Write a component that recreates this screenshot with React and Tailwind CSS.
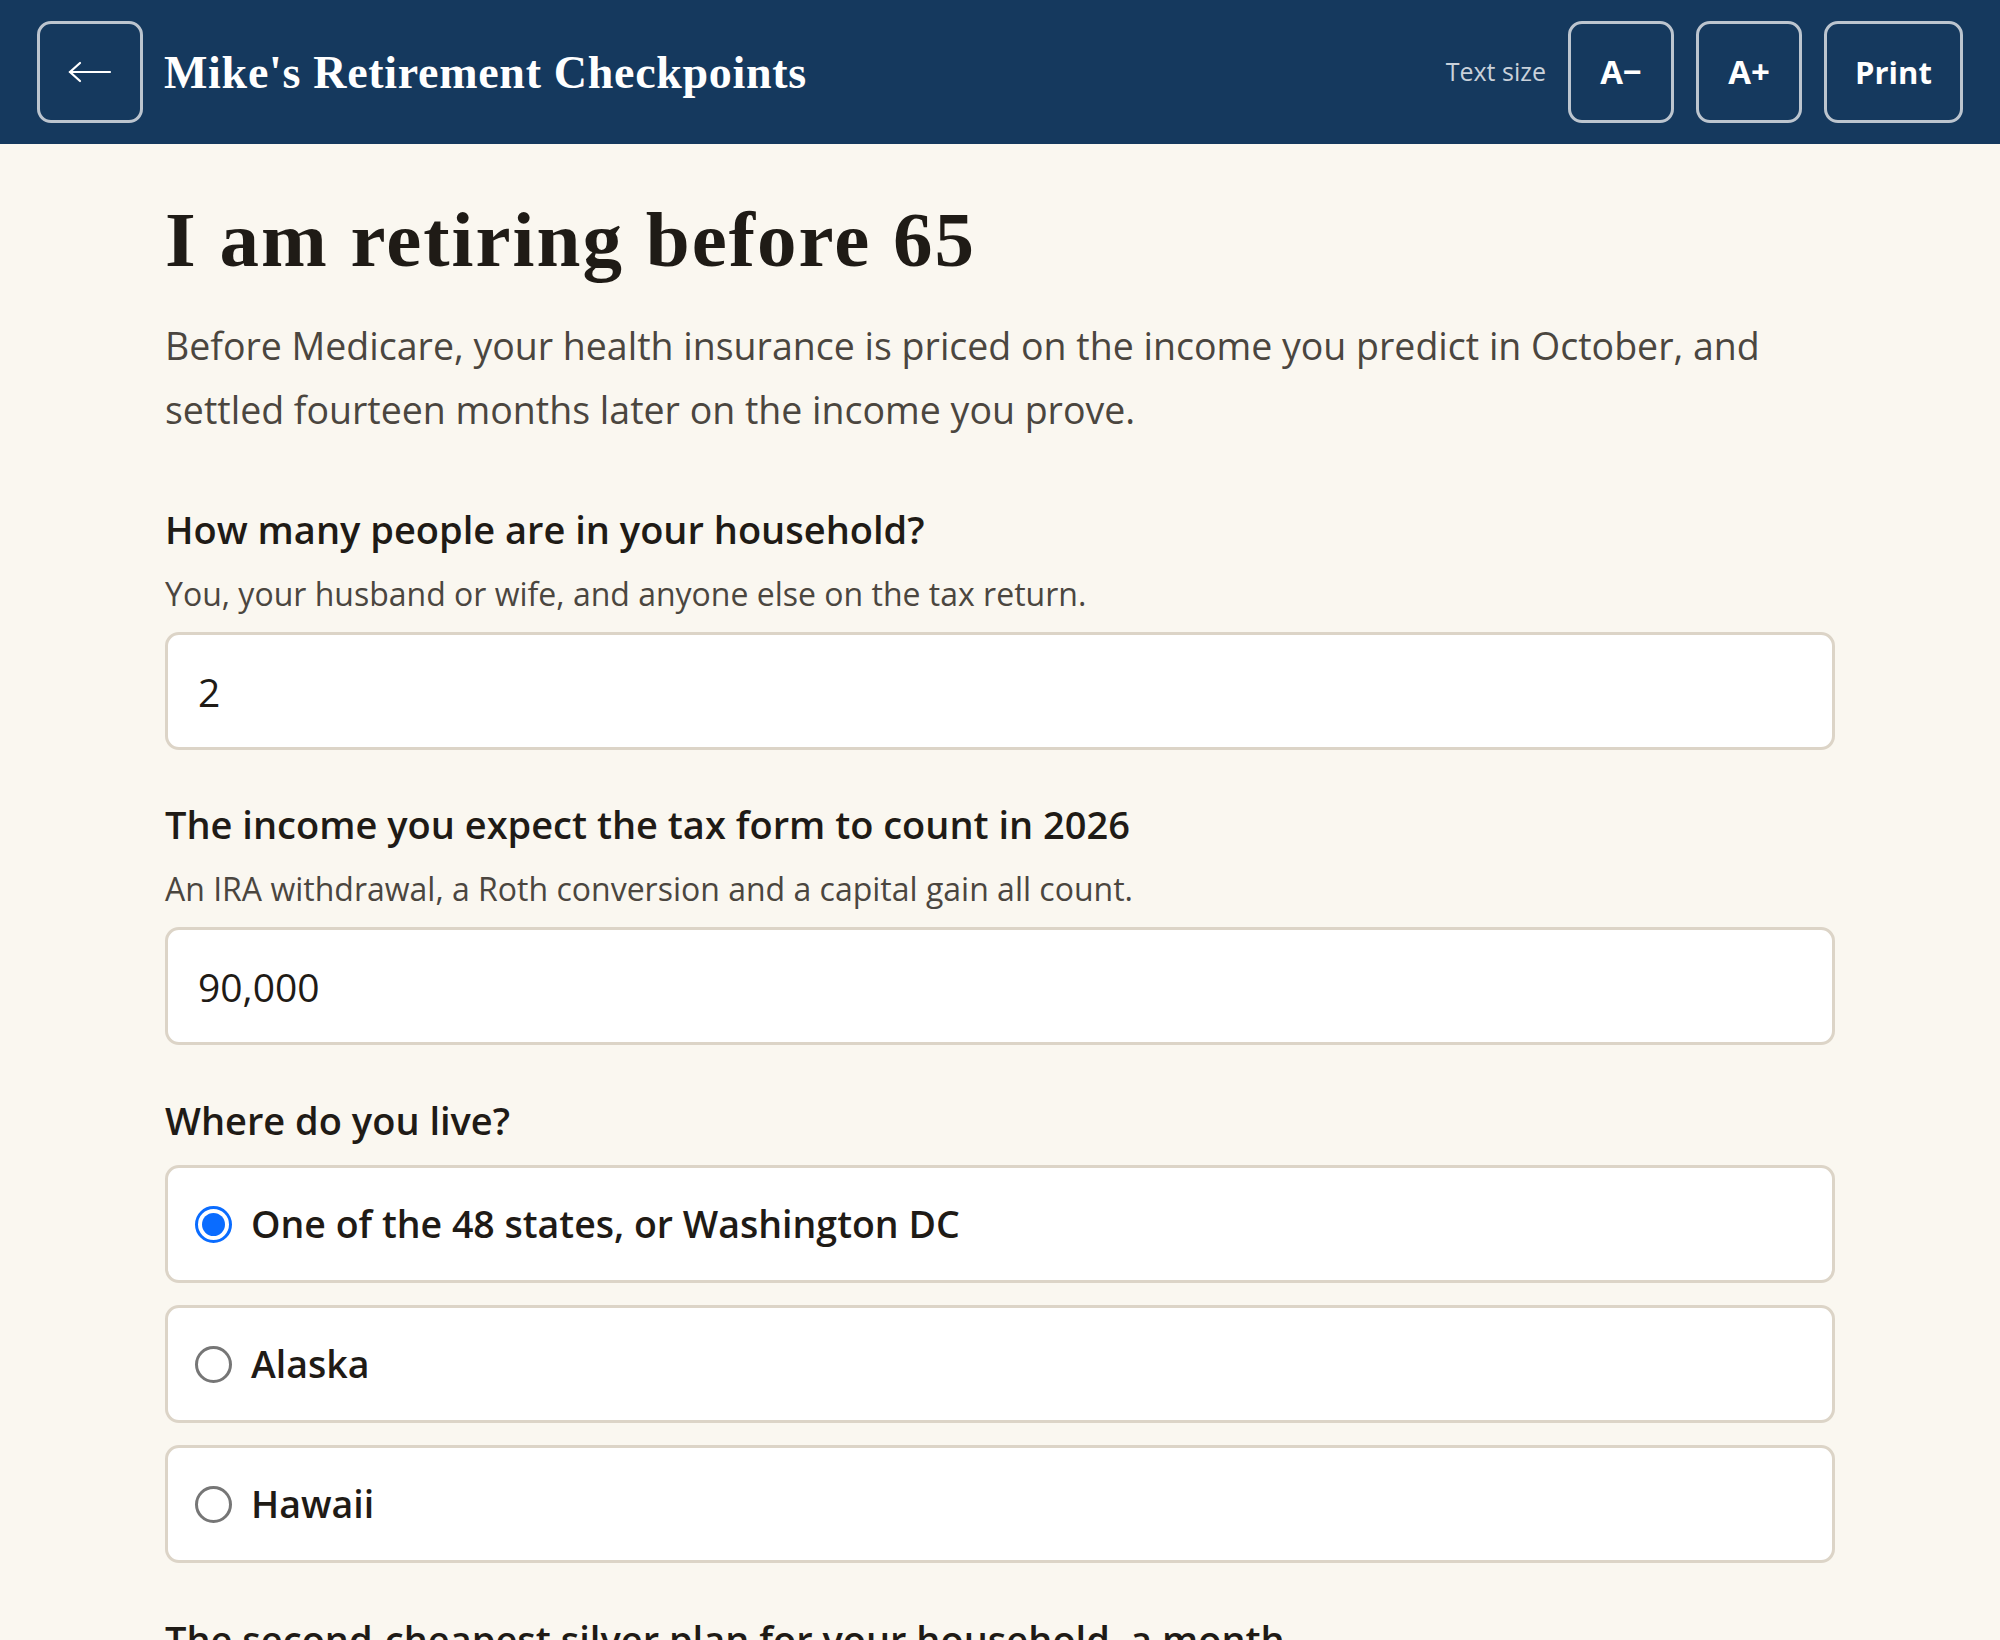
import { useState } from "react";

const serif = "font-['Liberation_Serif',serif]";
const sans = "font-['Open_Sans',sans-serif]";

function HeaderButton({ children, wide }) {
  return (
    <button
      className={`${wide ? "w-[139px] text-[31px]" : "w-[106px] text-[33px]"} h-[102px] rounded-[14px] border-[3px] border-[#bcc5cf] text-white font-bold ${sans}`}
    >
      {children}
    </button>
  );
}

function Field({ label, hint, value, first }) {
  return (
    <div className={first ? "mt-[63px]" : "mt-[50px]"}>
      <div className="text-[38px] leading-[48px] font-semibold text-[#1f1b16]">{label}</div>
      <div className="mt-[21px] text-[32px] leading-[40px] text-[#4b463f]">{hint}</div>
      <input
        defaultValue={value}
        className="mt-[18px] w-full h-[118px] rounded-[14px] border-[3px] border-[#dcd4c7] bg-white px-[30px] text-[39px] text-[#1f1b16] outline-none"
      />
    </div>
  );
}

function Radio({ checked, label, onClick }) {
  return (
    <button
      onClick={onClick}
      className="w-full h-[118px] rounded-[14px] border-[3px] border-[#dcd4c7] bg-white pl-[27px] flex items-center gap-[19px] text-left"
    >
      {checked ? (
        <span className="w-[37px] h-[37px] rounded-full border-[3px] border-[#0a6cff] flex items-center justify-center">
          <span className="w-[23px] h-[23px] rounded-full bg-[#0a6cff]" />
        </span>
      ) : (
        <span className="w-[37px] h-[37px] rounded-full border-[3px] border-[#767676]" />
      )}
      <span className="text-[37.5px] font-semibold text-[#1f1b16]">{label}</span>
    </button>
  );
}

export default function App() {
  const [place, setPlace] = useState(0);
  const places = ["One of the 48 states, or Washington DC", "Alaska", "Hawaii"];

  return (
    <div className={`min-h-[1640px] bg-[#faf7f0] ${sans}`}>
      <header className="h-[144px] bg-[#15395e] flex items-center px-[37px]">
        <button className="w-[106px] h-[102px] rounded-[14px] border-[3px] border-[#bcc5cf] flex items-center justify-center">
          <svg width="44" height="22" viewBox="0 0 44 22" fill="none" stroke="white" strokeWidth="2.2" strokeLinecap="round">
            <path d="M2 11 H42" />
            <path d="M12 2 L2 11 L12 20" />
          </svg>
        </button>
        <h1 className={`ml-[21px] text-[46px] font-bold tracking-[0.7px] text-white ${serif}`}>
          Mike's Retirement Checkpoints
        </h1>
        <div className="ml-auto flex items-center gap-[22px]">
          <span className="text-[25px] text-[#c9d1da]">Text size</span>
          <HeaderButton>A−</HeaderButton>
          <HeaderButton>A+</HeaderButton>
          <HeaderButton wide>Print</HeaderButton>
        </div>
      </header>

      <main className="w-[1670px] mx-auto pt-[53px]">
        <h2 className={`text-[79px] leading-[86px] font-bold tracking-[2px] text-[#1f1b16] ${serif}`}>
          I am retiring before 65
        </h2>
        <p className="mt-[31px] text-[37.5px] leading-[64px] text-[#4b463f] pr-[40px]">
          Before Medicare, your health insurance is priced on the income you predict in October, and settled fourteen months later on the income you prove.
        </p>

        <Field
          first
          label="How many people are in your household?"
          hint="You, your husband or wife, and anyone else on the tax return."
          value="2"
        />
        <Field
          label="The income you expect the tax form to count in 2026"
          hint="An IRA withdrawal, a Roth conversion and a capital gain all count."
          value="90,000"
        />

        <div className="mt-[51px]">
          <div className="text-[38px] leading-[48px] font-semibold text-[#1f1b16]">Where do you live?</div>
          <div className="mt-[21px] flex flex-col gap-[22px]">
            {places.map((p, i) => (
              <Radio key={p} label={p} checked={place === i} onClick={() => setPlace(i)} />
            ))}
          </div>
        </div>

        <div className="mt-[52px] text-[38px] leading-[48px] font-semibold text-[#1f1b16]">
          The second-cheapest silver plan for your household, a month
        </div>
      </main>
    </div>
  );
}
